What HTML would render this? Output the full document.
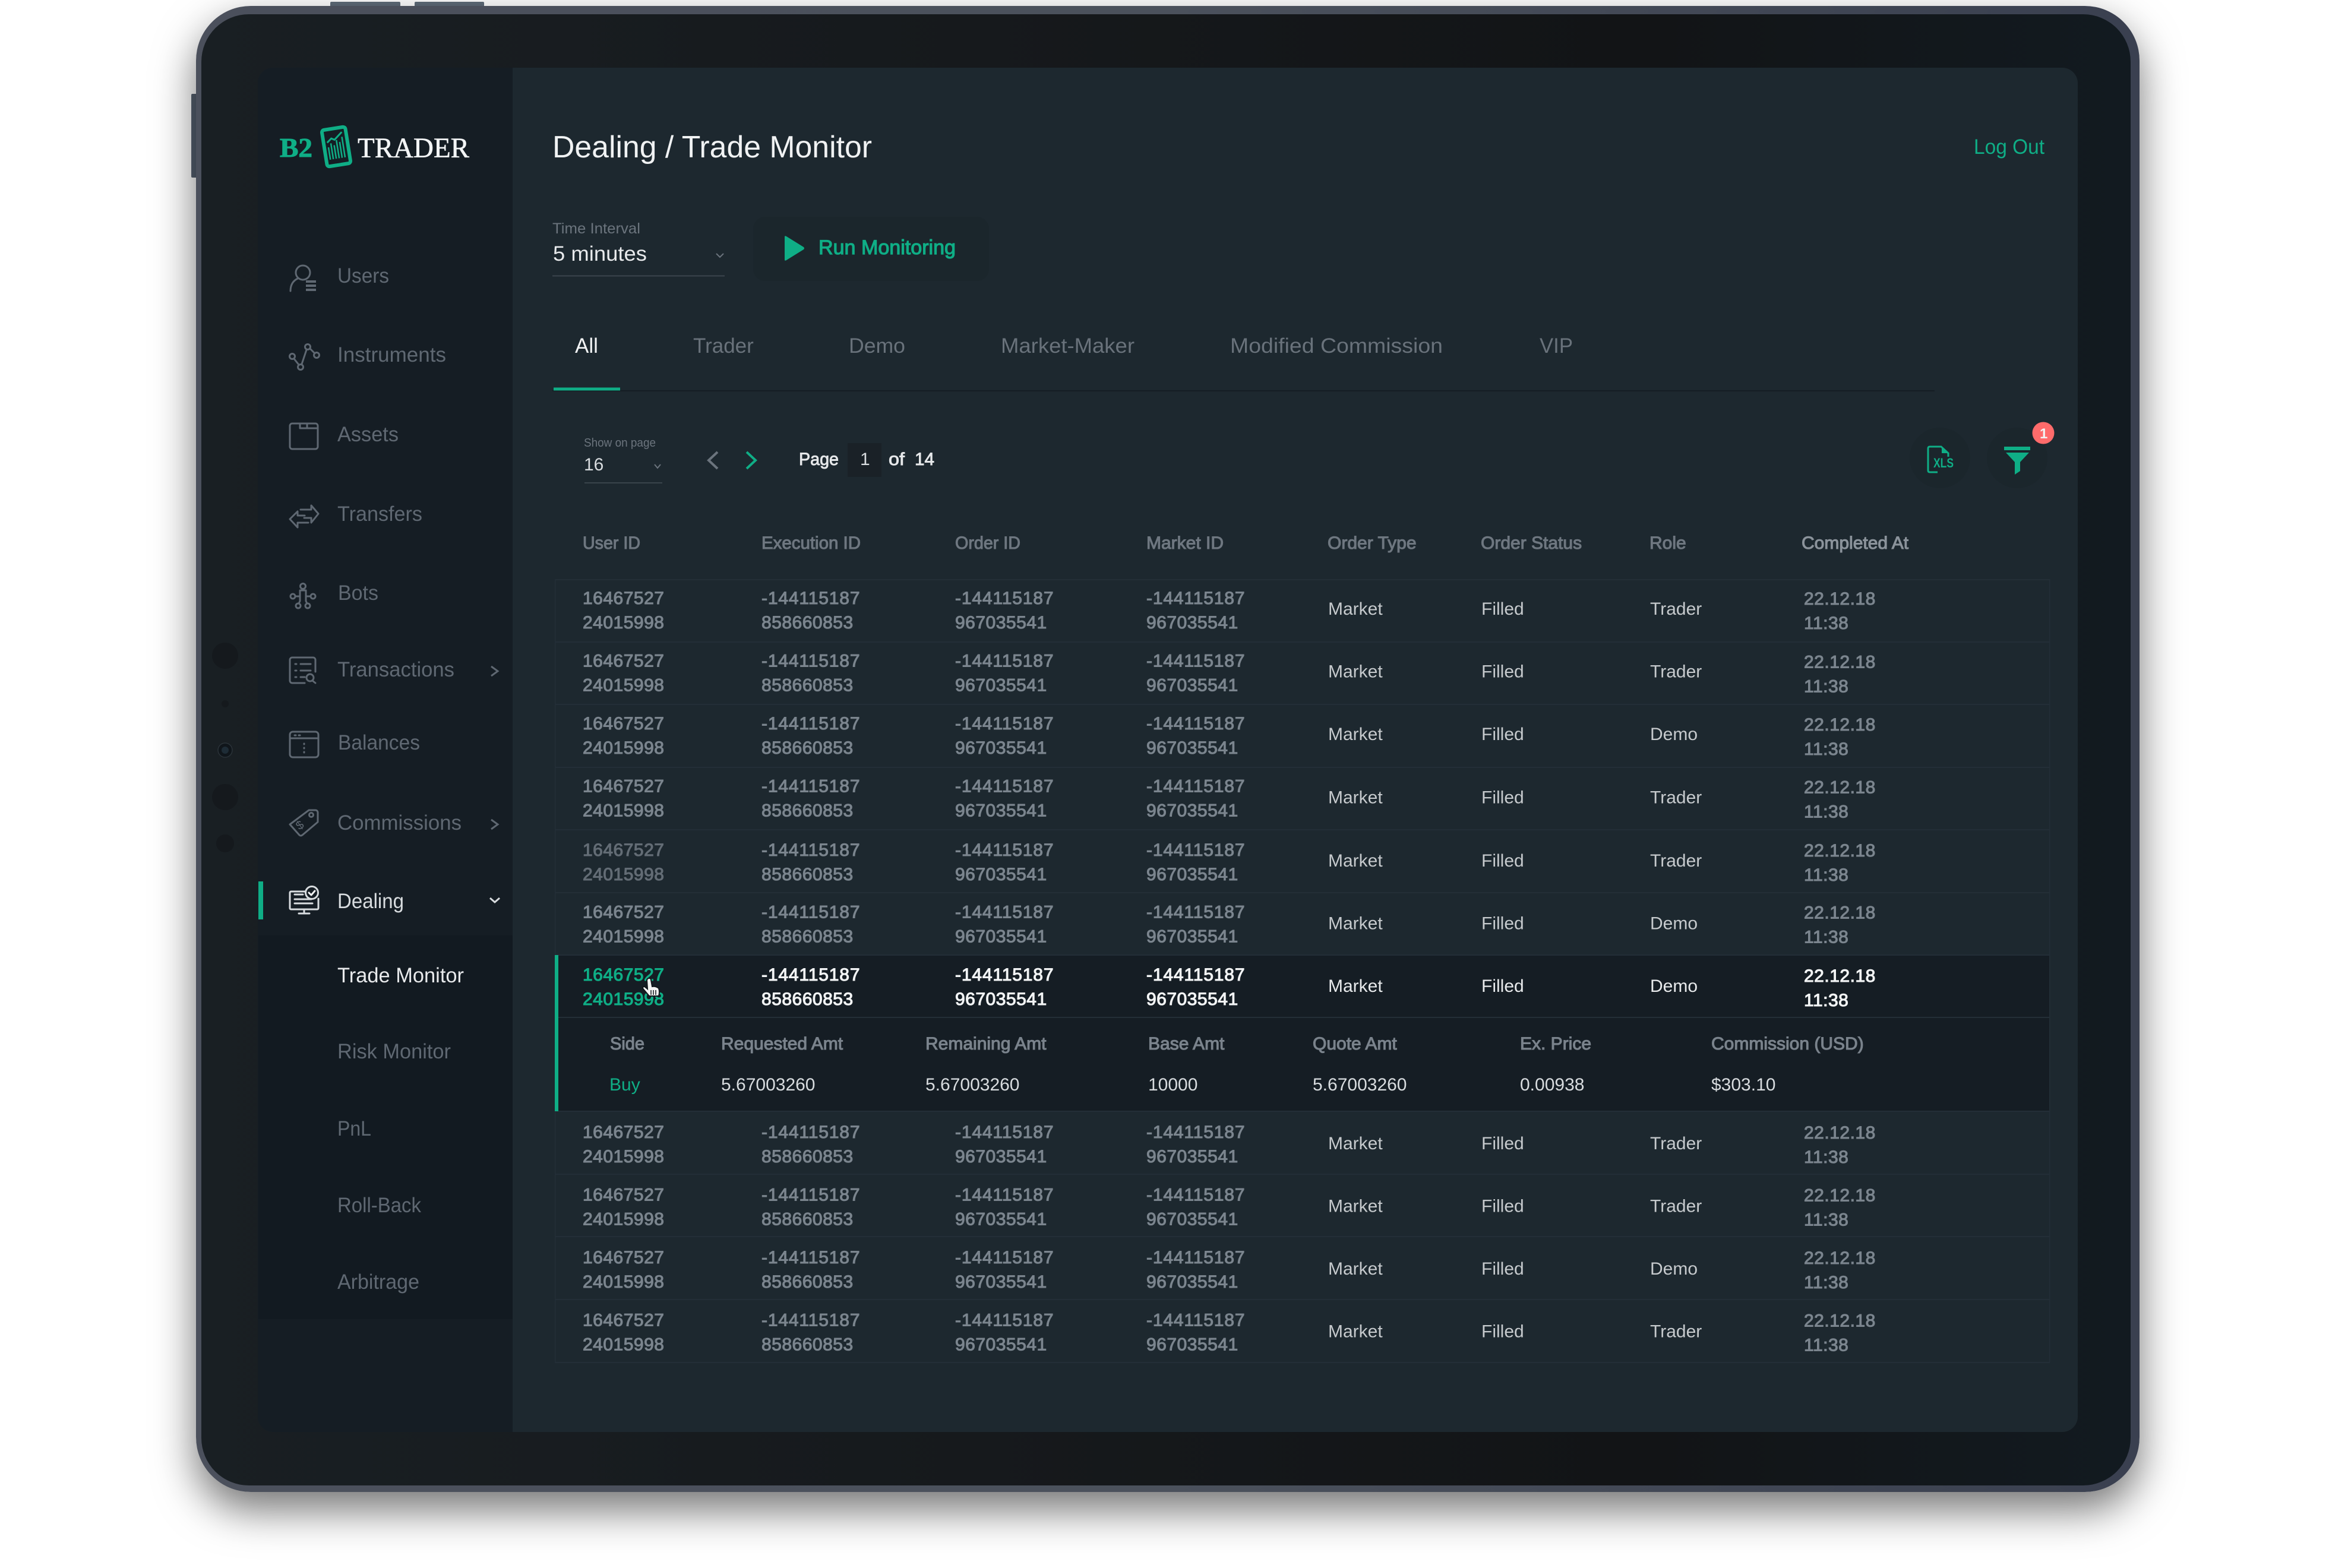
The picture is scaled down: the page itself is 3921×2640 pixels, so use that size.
<!DOCTYPE html>
<html><head><meta charset="utf-8"><title>B2 Trader - Trade Monitor</title>
<style>
html,body{margin:0;padding:0;background:#fff;width:3921px;height:2640px;overflow:hidden}
#dev{position:absolute;left:330px;top:10px;width:3272px;height:2502px;border-radius:92px;background:linear-gradient(90deg,#4b505c,#4b515c 50%,#3a4050);box-shadow:0 30px 70px rgba(0,0,0,.55)}
#bez{position:absolute;left:339px;top:24px;width:3248px;height:2477px;border-radius:80px;background:linear-gradient(90deg,#191f23,#16191c 40%,#121416 75%,#121a20)}
svg{position:absolute;left:0;top:0}
text{font-family:"Liberation Sans",sans-serif;white-space:pre}
.n{font-size:30px;fill:#7b858e;stroke:#7b858e;stroke-width:1.1;letter-spacing:.5px}
.w{font-size:30px;fill:#f2f4f5;stroke:#f2f4f5;stroke-width:1.1;letter-spacing:.5px}
.g{font-size:30px;fill:#0fae86;stroke:#0fae86;stroke-width:1.1;letter-spacing:.5px}
.m{font-size:30px;fill:#c6cacd}
.h{font-size:30px;fill:#6e7780;stroke:#6e7780;stroke-width:1.1}
.d{font-size:30px;fill:#7a838c;stroke:#7a838c;stroke-width:1.1}
.v{font-size:30px;fill:#d8dcdf}
.s{font-size:35px;fill:#5f6872}
.t{font-size:35px;fill:#69727b}
.ic{fill:none;stroke:#5f6872;stroke-width:3;stroke-linecap:round;stroke-linejoin:round}
</style></head><body>
<div style="position:absolute;left:556px;top:3px;width:118px;height:10px;background:#5e6b78;border-radius:2px"></div>
<div style="position:absolute;left:698px;top:3px;width:117px;height:10px;background:#5e6b78;border-radius:2px"></div>
<div style="position:absolute;left:322px;top:158px;width:10px;height:141px;background:#566170;border-radius:2px"></div>
<div id="dev"></div><div id="bez"></div>
<svg width="3921" height="2640" viewBox="0 0 3921 2640" xmlns="http://www.w3.org/2000/svg">
<!-- camera dots -->
<g fill="#15191d"><circle cx="379" cy="1104" r="22"/><circle cx="379" cy="1185" r="6"/><circle cx="379" cy="1342" r="22"/><circle cx="379" cy="1420" r="15"/></g>
<circle cx="379" cy="1263" r="12" fill="#10161b" stroke="#2a3238" stroke-width="1.5"/><circle cx="379" cy="1263" r="6" fill="#1e2c36"/>
<!-- screen -->
<path d="M460 114H3472a26 26 0 0 1 26 26V2385a26 26 0 0 1-26 26H460a26 26 0 0 1-26-26V140a26 26 0 0 1 26-26z" fill="#1d282f"/>
<path d="M460 114H863V2411H460a26 26 0 0 1-26-26V140a26 26 0 0 1 26-26z" fill="#151d24"/>
<rect x="435" y="1575" width="428" height="646" fill="#121a21"/>
<rect x="435" y="1484" width="8" height="64" fill="#0fae86"/>

<!-- logo -->
<text x="471" y="264" style="font-family:'Liberation Serif',serif;font-weight:700;font-size:46px;fill:#0fae86;stroke:#0fae86;stroke-width:1" textLength="55" lengthAdjust="spacingAndGlyphs">B2</text>
<g transform="rotate(-9 566 247)">
<rect x="546" y="216" width="40" height="62" rx="4" fill="#151d24" stroke="#0fae86" stroke-width="6"/>
<path d="M553 246v21M558 240v27M563 244v23M568 236v31M573 240v27M578 232v35" stroke="#0fae86" stroke-width="2.5" fill="none"/>
<path d="M552 238l8-6 5 3 14-11" stroke="#0fae86" stroke-width="3" fill="none"/>
<rect x="562" y="270" width="8" height="5" fill="#151d24"/>
</g>
<text x="602" y="265" style="font-family:'Liberation Serif',serif;font-size:48px;fill:#f2f4f5;stroke:#f2f4f5;stroke-width:.6" textLength="188" lengthAdjust="spacingAndGlyphs">TRADER</text>

<!-- sidebar labels -->
<text class="s" x="568" y="476" textLength="87" lengthAdjust="spacingAndGlyphs">Users</text>
<text class="s" x="568" y="609" textLength="183" lengthAdjust="spacingAndGlyphs">Instruments</text>
<text class="s" x="568" y="743" textLength="103" lengthAdjust="spacingAndGlyphs">Assets</text>
<text class="s" x="568" y="877" textLength="143" lengthAdjust="spacingAndGlyphs">Transfers</text>
<text class="s" x="569" y="1010" textLength="68" lengthAdjust="spacingAndGlyphs">Bots</text>
<text class="s" x="568" y="1139" textLength="197" lengthAdjust="spacingAndGlyphs">Transactions</text>
<text class="s" x="569" y="1262" textLength="138" lengthAdjust="spacingAndGlyphs">Balances</text>
<text class="s" x="568" y="1397" textLength="209" lengthAdjust="spacingAndGlyphs">Commissions</text>
<text class="s" x="568" y="1529" style="fill:#d8dcdf" textLength="112" lengthAdjust="spacingAndGlyphs">Dealing</text>
<text class="s" x="568" y="1654" style="fill:#e8eaec" textLength="213" lengthAdjust="spacingAndGlyphs">Trade Monitor</text>
<text class="s" x="568" y="1782" textLength="191" lengthAdjust="spacingAndGlyphs">Risk Monitor</text>
<text class="s" x="568" y="1912" textLength="57" lengthAdjust="spacingAndGlyphs">PnL</text>
<text class="s" x="568" y="2041" textLength="141" lengthAdjust="spacingAndGlyphs">Roll-Back</text>
<text class="s" x="568" y="2170" textLength="138" lengthAdjust="spacingAndGlyphs">Arbitrage</text>

<!-- sidebar icons -->
<g class="ic">
<circle cx="510" cy="459" r="12"/><path d="M489 490c0-10 4-17 12-21"/><path d="M515 474h17M515 481h17M515 488h17" stroke-width="4" stroke-linecap="butt"/>
<circle cx="492" cy="600" r="4.5"/><circle cx="506" cy="618" r="4.5"/><circle cx="518" cy="584" r="4.5"/><circle cx="533" cy="598" r="4.5"/><path d="M495 604l8 10M508 613l8-24M522 587l8 8"/>
<path d="M488 725v-8a4 4 0 0 1 4-4h39a4 4 0 0 1 4 4v35a4 4 0 0 1-4 4h-39a4 4 0 0 1-4-4zM505 721h30M505 713v8M517 713v8"/>
<path d="M506 858H524V851L536 865 524 880V872H512M519 880H501V888L488 874 501 861V868H513"/>
<circle cx="510" cy="987" r="4.5"/><circle cx="493" cy="1004" r="4"/><circle cx="527" cy="1004" r="4"/><circle cx="502" cy="1020" r="4"/><circle cx="518" cy="1020" r="4"/><path d="M497 1004h8v-10h10v10h8M505 1004v8l-2 4M515 1004v8l2 4"/>
<path d="M513 1150H492a4 4 0 0 1-4-4v-35a4 4 0 0 1 4-4h35a4 4 0 0 1 4 4v20M506 1118h17M506 1129h17M506 1140h7M497 1118h2M497 1129h2M497 1140h2"/><circle cx="522" cy="1141" r="6"/><path d="M526 1146l5 4"/>
<rect x="488" y="1232" width="48" height="43" rx="5"/><path d="M488 1243h48M496 1238h2M503 1238h2M512 1252v1M512 1259v1M512 1266v1"/>
<path d="M488 1388L520 1364H531a4 4 0 0 1 4 4V1384L509 1406q-3 2-5 0z"/><circle cx="524" cy="1372" r="3.5"/>
</g>
<text x="0" y="0" transform="translate(504 1398) rotate(-35)" style="font-size:20px;fill:#5f6872">$</text>
<path d="M827 1122l11 8-11 8M827 1380l11 8-11 8" fill="none" stroke="#5f6872" stroke-width="3"/>
<path d="M825 1512l8 7 8-7" fill="none" stroke="#d8dcdf" stroke-width="3"/>
<g fill="none" stroke="#d8dcdf" stroke-width="3" stroke-linecap="round" stroke-linejoin="round">
<path d="M514 1501H490a2 2 0 0 0-2 2v26a2 2 0 0 0 2 2H534a2 2 0 0 0 2-2V1513M496 1506h14M496 1514h28M496 1521h30M512 1531v7M503 1538h18"/>
<circle cx="525" cy="1503" r="10.5"/><path d="M520 1503l4 4 6-7" stroke="#f2f4f5"/>
</g>

<!-- header -->
<text x="930" y="265" style="font-size:52px;fill:#f0f2f3" textLength="538" lengthAdjust="spacingAndGlyphs">Dealing / Trade Monitor</text>
<text x="3323" y="259" style="font-size:35px;fill:#0fae86" textLength="119" lengthAdjust="spacingAndGlyphs">Log Out</text>
<text x="930" y="393" style="font-size:25px;fill:#6b747d" textLength="148" lengthAdjust="spacingAndGlyphs">Time Interval</text>
<text x="931" y="439" style="font-size:35px;fill:#e8eaec" textLength="158" lengthAdjust="spacingAndGlyphs">5 minutes</text>
<path d="M1206 427l6 6 6-6" fill="none" stroke="#6b747d" stroke-width="2"/>
<rect x="930" y="463.5" width="290" height="2" fill="#3a444c"/>
<rect x="1268" y="365" width="397" height="108" rx="20" fill="#1b262c"/>
<path d="M1321 399q0-3 3-1l29 18q2 2 0 4l-29 18q-3 2-3-1z" fill="#0fae86"/>
<text x="1378" y="428" style="font-size:34px;fill:#0fae86;stroke:#0fae86;stroke-width:1.2" textLength="231" lengthAdjust="spacingAndGlyphs">Run Monitoring</text>

<!-- tabs -->
<text x="968" y="594" style="font-size:35px;fill:#f2f4f5">All</text>
<text class="t" x="1167" y="594">Trader</text>
<text class="t" x="1429" y="594" textLength="95" lengthAdjust="spacingAndGlyphs">Demo</text>
<text class="t" x="1685" y="594" textLength="225" lengthAdjust="spacingAndGlyphs">Market-Maker</text>
<text class="t" x="2071" y="594" textLength="358" lengthAdjust="spacingAndGlyphs">Modified Commission</text>
<text class="t" x="2592" y="594" textLength="56" lengthAdjust="spacingAndGlyphs">VIP</text>
<rect x="930" y="657" width="2327" height="2" fill="#151d24"/>
<rect x="932" y="652.5" width="112" height="5" fill="#0fae86"/>

<!-- pagination -->
<text x="983" y="752" style="font-size:20px;fill:#6b747d" textLength="121" lengthAdjust="spacingAndGlyphs">Show on page</text>
<text x="983" y="792" style="font-size:30px;fill:#d8dcdf">16</text>
<path d="M1102 782l5 6 5-6" fill="none" stroke="#6b747d" stroke-width="2"/>
<rect x="984" y="812" width="131" height="2" fill="#3a444c"/>
<path d="M1208 761l-15 14 15 14" fill="none" stroke="#6b747d" stroke-width="4"/>
<path d="M1257 761l15 14-15 14" fill="none" stroke="#0fae86" stroke-width="4"/>
<text class="v" x="1345" y="783" style="fill:#e6e8ea;stroke:#e6e8ea;stroke-width:.9" textLength="67" lengthAdjust="spacingAndGlyphs">Page</text>
<rect x="1427" y="746" width="57" height="57" fill="#1a2127"/>
<text class="v" x="1448" y="783">1</text>
<text class="v" x="1496" y="783" style="fill:#e6e8ea;stroke:#e6e8ea;stroke-width:.9" textLength="27" lengthAdjust="spacingAndGlyphs">of</text>
<text class="v" x="1540" y="783" style="fill:#e6e8ea;stroke:#e6e8ea;stroke-width:.9" textLength="33" lengthAdjust="spacingAndGlyphs">14</text>
<circle cx="3266" cy="771" r="51" fill="#1b262c"/><circle cx="3396" cy="771" r="51" fill="#1b262c"/>
<path d="M3262 795h-13q-3 0-3-3v-37q0-3 3-3h19l12 11v6" fill="none" stroke="#0fae86" stroke-width="3"/>
<path d="M3269 752l11 11h-11z" fill="#0fae86"/>
<text x="3255" y="787" style="font-size:22px;font-weight:700;fill:#0fae86" textLength="34" lengthAdjust="spacingAndGlyphs">XLS</text>
<rect x="3374" y="752" width="44" height="6" fill="#0fae86"/>
<path d="M3377 762h39l-15 16v15l-9 6v-21z" fill="#0fae86"/>
<circle cx="3440" cy="729" r="18.5" fill="#ff6b6b"/>
<text x="3434" y="738" style="font-size:24px;font-weight:700;fill:#f2f2f2">1</text>

<!-- table head -->
<g>
<text class="h" x="981" y="924" textLength="97" lengthAdjust="spacingAndGlyphs">User ID</text>
<text class="h" x="1282" y="924" textLength="167" lengthAdjust="spacingAndGlyphs">Execution ID</text>
<text class="h" x="1608" y="924" textLength="110" lengthAdjust="spacingAndGlyphs">Order ID</text>
<text class="h" x="1930" y="924">Market ID</text>
<text class="h" x="2235" y="924">Order Type</text>
<text class="h" x="2493" y="924">Order Status</text>
<text class="h" x="2777" y="924">Role</text>
<text class="h" x="3033" y="924" style="fill:#8b939b;stroke:#8b939b">Completed At</text>
</g>
<!-- selected row bg -->
<rect x="934" y="1608" width="2516" height="263" fill="#151d24"/>
<!-- grid -->
<g fill="#232e37">
<rect x="934" y="975" width="2517" height="2"/>
<rect x="934" y="1080" width="2517" height="2"/>
<rect x="934" y="1185" width="2517" height="2"/>
<rect x="934" y="1291" width="2517" height="2"/>
<rect x="934" y="1396" width="2517" height="2"/>
<rect x="934" y="1502" width="2517" height="2"/>
<rect x="934" y="1607" width="2517" height="2"/>
<rect x="940" y="1712" width="2511" height="2"/>
<rect x="934" y="1870" width="2517" height="2"/>
<rect x="934" y="1976" width="2517" height="2"/>
<rect x="934" y="2081" width="2517" height="2"/>
<rect x="934" y="2187" width="2517" height="2"/>
<rect x="934" y="2293" width="2517" height="2"/>
<rect x="3450" y="975" width="1.5" height="1319"/>
<rect x="934" y="975" width="1.5" height="1319"/>
</g>
<rect x="934" y="1608" width="6" height="263" fill="#0fae86"/>

<!-- rows -->
<g transform="translate(0,975)">
<text class="n" x="981" y="42">16467527</text><text class="n" x="981" y="83">24015998</text>
<text class="n" x="1282" y="42" textLength="166">-144115187</text><text class="n" x="1282" y="83">858660853</text>
<text class="n" x="1608" y="42" textLength="166">-144115187</text><text class="n" x="1608" y="83">967035541</text>
<text class="n" x="1930" y="42" textLength="166">-144115187</text><text class="n" x="1930" y="83">967035541</text>
<text class="m" x="2236" y="60">Market</text><text class="m" x="2494" y="60">Filled</text><text class="m" x="2778" y="60">Trader</text>
<text class="n" x="3037" y="43">22.12.18</text><text class="n" x="3037" y="84">11:38</text>
</g>
<g transform="translate(0,1080.5)">
<text class="n" x="981" y="42">16467527</text><text class="n" x="981" y="83">24015998</text>
<text class="n" x="1282" y="42" textLength="166">-144115187</text><text class="n" x="1282" y="83">858660853</text>
<text class="n" x="1608" y="42" textLength="166">-144115187</text><text class="n" x="1608" y="83">967035541</text>
<text class="n" x="1930" y="42" textLength="166">-144115187</text><text class="n" x="1930" y="83">967035541</text>
<text class="m" x="2236" y="60">Market</text><text class="m" x="2494" y="60">Filled</text><text class="m" x="2778" y="60">Trader</text>
<text class="n" x="3037" y="44">22.12.18</text><text class="n" x="3037" y="85">11:38</text>
</g>
<g transform="translate(0,1186)">
<text class="n" x="981" y="42">16467527</text><text class="n" x="981" y="83">24015998</text>
<text class="n" x="1282" y="42" textLength="166">-144115187</text><text class="n" x="1282" y="83">858660853</text>
<text class="n" x="1608" y="42" textLength="166">-144115187</text><text class="n" x="1608" y="83">967035541</text>
<text class="n" x="1930" y="42" textLength="166">-144115187</text><text class="n" x="1930" y="83">967035541</text>
<text class="m" x="2236" y="60">Market</text><text class="m" x="2494" y="60">Filled</text><text class="m" x="2778" y="60">Demo</text>
<text class="n" x="3037" y="44">22.12.18</text><text class="n" x="3037" y="85">11:38</text>
</g>
<g transform="translate(0,1291.5)">
<text class="n" x="981" y="42">16467527</text><text class="n" x="981" y="83">24015998</text>
<text class="n" x="1282" y="42" textLength="166">-144115187</text><text class="n" x="1282" y="83">858660853</text>
<text class="n" x="1608" y="42" textLength="166">-144115187</text><text class="n" x="1608" y="83">967035541</text>
<text class="n" x="1930" y="42" textLength="166">-144115187</text><text class="n" x="1930" y="83">967035541</text>
<text class="m" x="2236" y="61">Market</text><text class="m" x="2494" y="61">Filled</text><text class="m" x="2778" y="61">Trader</text>
<text class="n" x="3037" y="44">22.12.18</text><text class="n" x="3037" y="85">11:38</text>
</g>
<g transform="translate(0,1397)">
<text class="n" x="981" y="44" style="fill:#636c75;stroke:#636c75">16467527</text><text class="n" x="981" y="85" style="fill:#636c75;stroke:#636c75">24015998</text>
<text class="n" x="1282" y="44" textLength="166">-144115187</text><text class="n" x="1282" y="85">858660853</text>
<text class="n" x="1608" y="44" textLength="166">-144115187</text><text class="n" x="1608" y="85">967035541</text>
<text class="n" x="1930" y="44" textLength="166">-144115187</text><text class="n" x="1930" y="85">967035541</text>
<text class="m" x="2236" y="62">Market</text><text class="m" x="2494" y="62">Filled</text><text class="m" x="2778" y="62">Trader</text>
<text class="n" x="3037" y="45">22.12.18</text><text class="n" x="3037" y="86">11:38</text>
</g>
<g transform="translate(0,1502.5)">
<text class="n" x="981" y="43">16467527</text><text class="n" x="981" y="84">24015998</text>
<text class="n" x="1282" y="43" textLength="166">-144115187</text><text class="n" x="1282" y="84">858660853</text>
<text class="n" x="1608" y="43" textLength="166">-144115187</text><text class="n" x="1608" y="84">967035541</text>
<text class="n" x="1930" y="43" textLength="166">-144115187</text><text class="n" x="1930" y="84">967035541</text>
<text class="m" x="2236" y="62">Market</text><text class="m" x="2494" y="62">Filled</text><text class="m" x="2778" y="62">Demo</text>
<text class="n" x="3037" y="44">22.12.18</text><text class="n" x="3037" y="85">11:38</text>
</g>
<!-- selected -->
<g transform="translate(0,1608)">
<text class="g" x="981" y="43">16467527</text><text class="g" x="981" y="84">24015998</text>
<text class="w" x="1282" y="43" textLength="166">-144115187</text><text class="w" x="1282" y="84">858660853</text>
<text class="w" x="1608" y="43" textLength="166">-144115187</text><text class="w" x="1608" y="84">967035541</text>
<text class="w" x="1930" y="43" textLength="166">-144115187</text><text class="w" x="1930" y="84">967035541</text>
<text class="m" x="2236" y="62" style="fill:#e8eaec">Market</text><text class="m" x="2494" y="62" style="fill:#e8eaec">Filled</text><text class="m" x="2778" y="62" style="fill:#e8eaec">Demo</text>
<text class="w" x="3037" y="45">22.12.18</text><text class="w" x="3037" y="86">11:38</text>
</g>
<!-- detail -->
<g>
<text class="d" x="1027" y="1767" textLength="58" lengthAdjust="spacingAndGlyphs">Side</text>
<text class="d" x="1214" y="1767">Requested Amt</text>
<text class="d" x="1558" y="1767">Remaining Amt</text>
<text class="d" x="1933" y="1767">Base Amt</text>
<text class="d" x="2210" y="1767">Quote Amt</text>
<text class="d" x="2559" y="1767">Ex. Price</text>
<text class="d" x="2881" y="1767">Commission (USD)</text>
<text class="v" x="1026" y="1836" style="fill:#0fae86">Buy</text>
<text class="v" x="1214" y="1836">5.67003260</text>
<text class="v" x="1558" y="1836">5.67003260</text>
<text class="v" x="1933" y="1836">10000</text>
<text class="v" x="2210" y="1836">5.67003260</text>
<text class="v" x="2559" y="1836">0.00938</text>
<text class="v" x="2881" y="1836">$303.10</text>
</g>
<g transform="translate(0,1871)">
<text class="n" x="981" y="45">16467527</text><text class="n" x="981" y="86">24015998</text>
<text class="n" x="1282" y="45" textLength="166">-144115187</text><text class="n" x="1282" y="86">858660853</text>
<text class="n" x="1608" y="45" textLength="166">-144115187</text><text class="n" x="1608" y="86">967035541</text>
<text class="n" x="1930" y="45" textLength="166">-144115187</text><text class="n" x="1930" y="86">967035541</text>
<text class="m" x="2236" y="64">Market</text><text class="m" x="2494" y="64">Filled</text><text class="m" x="2778" y="64">Trader</text>
<text class="n" x="3037" y="46">22.12.18</text><text class="n" x="3037" y="87">11:38</text>
</g>
<g transform="translate(0,1976.5)">
<text class="n" x="981" y="45">16467527</text><text class="n" x="981" y="86">24015998</text>
<text class="n" x="1282" y="45" textLength="166">-144115187</text><text class="n" x="1282" y="86">858660853</text>
<text class="n" x="1608" y="45" textLength="166">-144115187</text><text class="n" x="1608" y="86">967035541</text>
<text class="n" x="1930" y="45" textLength="166">-144115187</text><text class="n" x="1930" y="86">967035541</text>
<text class="m" x="2236" y="64">Market</text><text class="m" x="2494" y="64">Filled</text><text class="m" x="2778" y="64">Trader</text>
<text class="n" x="3037" y="46">22.12.18</text><text class="n" x="3037" y="87">11:38</text>
</g>
<g transform="translate(0,2082)">
<text class="n" x="981" y="45">16467527</text><text class="n" x="981" y="86">24015998</text>
<text class="n" x="1282" y="45" textLength="166">-144115187</text><text class="n" x="1282" y="86">858660853</text>
<text class="n" x="1608" y="45" textLength="166">-144115187</text><text class="n" x="1608" y="86">967035541</text>
<text class="n" x="1930" y="45" textLength="166">-144115187</text><text class="n" x="1930" y="86">967035541</text>
<text class="m" x="2236" y="64">Market</text><text class="m" x="2494" y="64">Filled</text><text class="m" x="2778" y="64">Demo</text>
<text class="n" x="3037" y="46">22.12.18</text><text class="n" x="3037" y="87">11:38</text>
</g>
<g transform="translate(0,2187.5)">
<text class="n" x="981" y="45">16467527</text><text class="n" x="981" y="86">24015998</text>
<text class="n" x="1282" y="45" textLength="166">-144115187</text><text class="n" x="1282" y="86">858660853</text>
<text class="n" x="1608" y="45" textLength="166">-144115187</text><text class="n" x="1608" y="86">967035541</text>
<text class="n" x="1930" y="45" textLength="166">-144115187</text><text class="n" x="1930" y="86">967035541</text>
<text class="m" x="2236" y="64">Market</text><text class="m" x="2494" y="64">Filled</text><text class="m" x="2778" y="64">Trader</text>
<text class="n" x="3037" y="46">22.12.18</text><text class="n" x="3037" y="87">11:38</text>
</g>
<!-- cursor -->
<path d="M1089 1650q1-3 4-3 3 0 3 3l2 11q6-1 11 3 2 6 0 13h-16l-11-13q0-3 3-3l5 4z" fill="#f4f4f4" stroke="#10161b" stroke-width="2"/>
<path d="M1096 1667v8M1100 1667v8M1104 1667v8" stroke="#10161b" stroke-width="1.5"/>
</svg>
</body></html>
